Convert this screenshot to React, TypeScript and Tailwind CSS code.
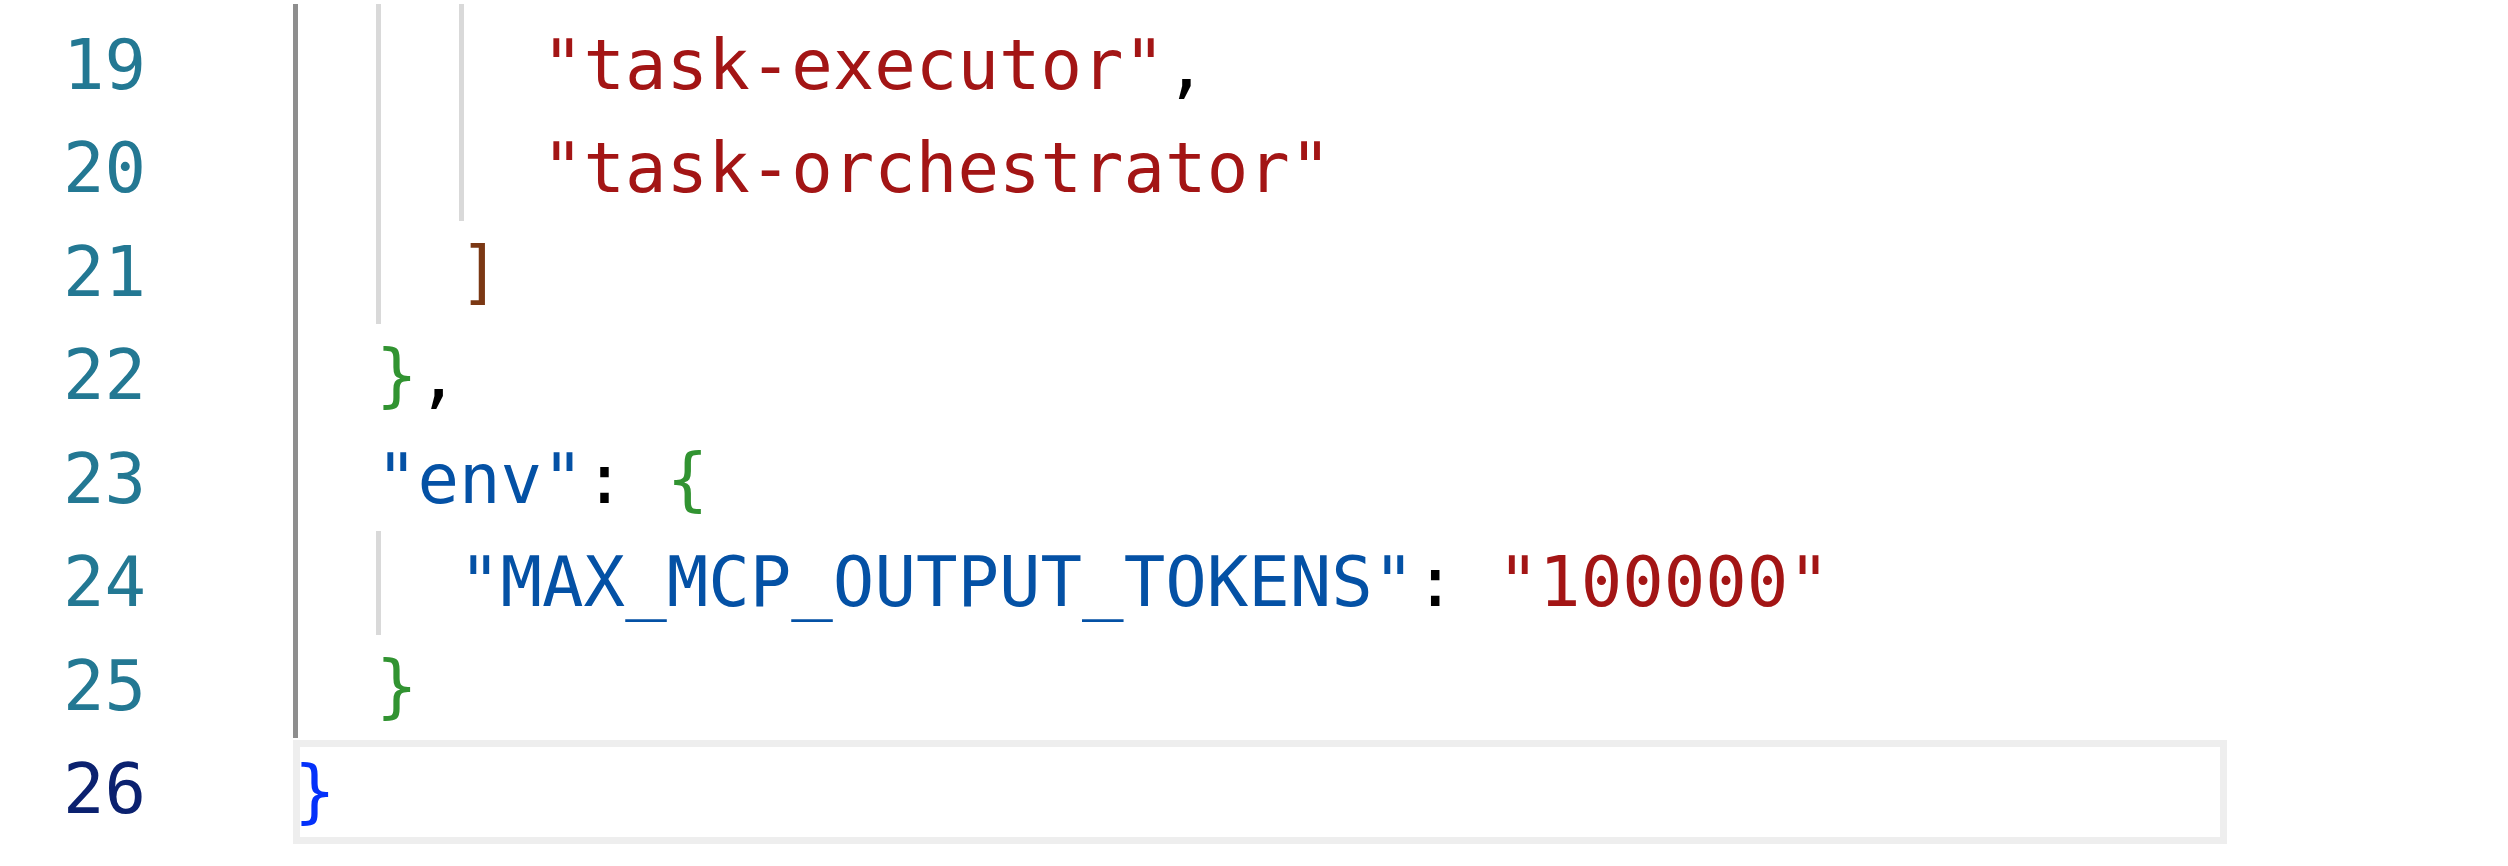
import React from 'react';

type Tok = { t: string; c: string };

const STR = 'text-[#a31515]';
const KEY = 'text-[#0451a5]';
const PUNC = 'text-black';
const B1 = 'text-[#0431fa]';
const B2 = 'text-[#319331]';
const B3 = 'text-[#7b3814]';

const lines: { n: number; indent: number; guides: number[]; tokens: Tok[]; active?: boolean }[] = [
  { n: 19, indent: 6, guides: [0, 2, 4], tokens: [{ t: '"task-executor"', c: STR }, { t: ',', c: PUNC }] },
  { n: 20, indent: 6, guides: [0, 2, 4], tokens: [{ t: '"task-orchestrator"', c: STR }] },
  { n: 21, indent: 4, guides: [0, 2], tokens: [{ t: ']', c: B3 }] },
  { n: 22, indent: 2, guides: [0], tokens: [{ t: '}', c: B2 }, { t: ',', c: PUNC }] },
  { n: 23, indent: 2, guides: [0], tokens: [{ t: '"env"', c: KEY }, { t: ': ', c: PUNC }, { t: '{', c: B2 }] },
  {
    n: 24,
    indent: 4,
    guides: [0, 2],
    tokens: [{ t: '"MAX_MCP_OUTPUT_TOKENS"', c: KEY }, { t: ': ', c: PUNC }, { t: '"100000"', c: STR }],
  },
  { n: 25, indent: 2, guides: [0], tokens: [{ t: '}', c: B2 }] },
  { n: 26, indent: 0, guides: [], tokens: [{ t: '}', c: B1 }], active: true },
];

// one indent step = 2 columns of the mono font
const Indent: React.FC<{ cols: number; guides: number[] }> = ({ cols, guides }) => (
  <>
    {Array.from({ length: cols / 2 }).map((_, i) => {
      const col = i * 2;
      const has = guides.includes(col);
      return (
        <span
          key={col}
          className={`block h-full w-[83px] shrink-0 ${
            has ? (col === 0 ? 'border-l-[5px] border-[#8e8e8e]' : 'border-l-[5px] border-[#d9d9d9]') : ''
          }`}
        />
      );
    })}
  </>
);

const App: React.FC = () => {
  return (
    <div className="min-h-screen w-full bg-white pt-[4px] font-['DejaVu_Sans_Mono','Liberation_Mono',monospace] text-[69px] slashed-zero">
      {/* top part of the guides from the lines above */}
      <div className="flex h-[9.5px]">
        <div className="w-[293px] shrink-0" />
        <Indent cols={6} guides={[0, 2, 4]} />
      </div>

      {lines.map((line) => (
        <div key={line.n} className="flex h-[103.5px] leading-[103.5px]">
          <div
            className={`w-[293px] shrink-0 pr-[147px] text-right ${
              line.active ? 'text-[#0b216f]' : 'text-[#237893]'
            }`}
          >
            {line.n}
          </div>
          <div
            className={`flex w-[1934px] shrink-0 ${
              line.active ? 'mt-[2px] h-[104px] shadow-[inset_0_0_0_7px_#eeeeee]' : ''
            }`}
          >
            <Indent cols={line.indent} guides={line.guides} />
            <span className={`whitespace-pre ${line.active ? 'pl-[1px]' : ''}`}>
              {line.tokens.map((tok, i) => (
                <span key={i} className={tok.c}>
                  {tok.t}
                </span>
              ))}
            </span>
          </div>
        </div>
      ))}
    </div>
  );
};

export default App;
